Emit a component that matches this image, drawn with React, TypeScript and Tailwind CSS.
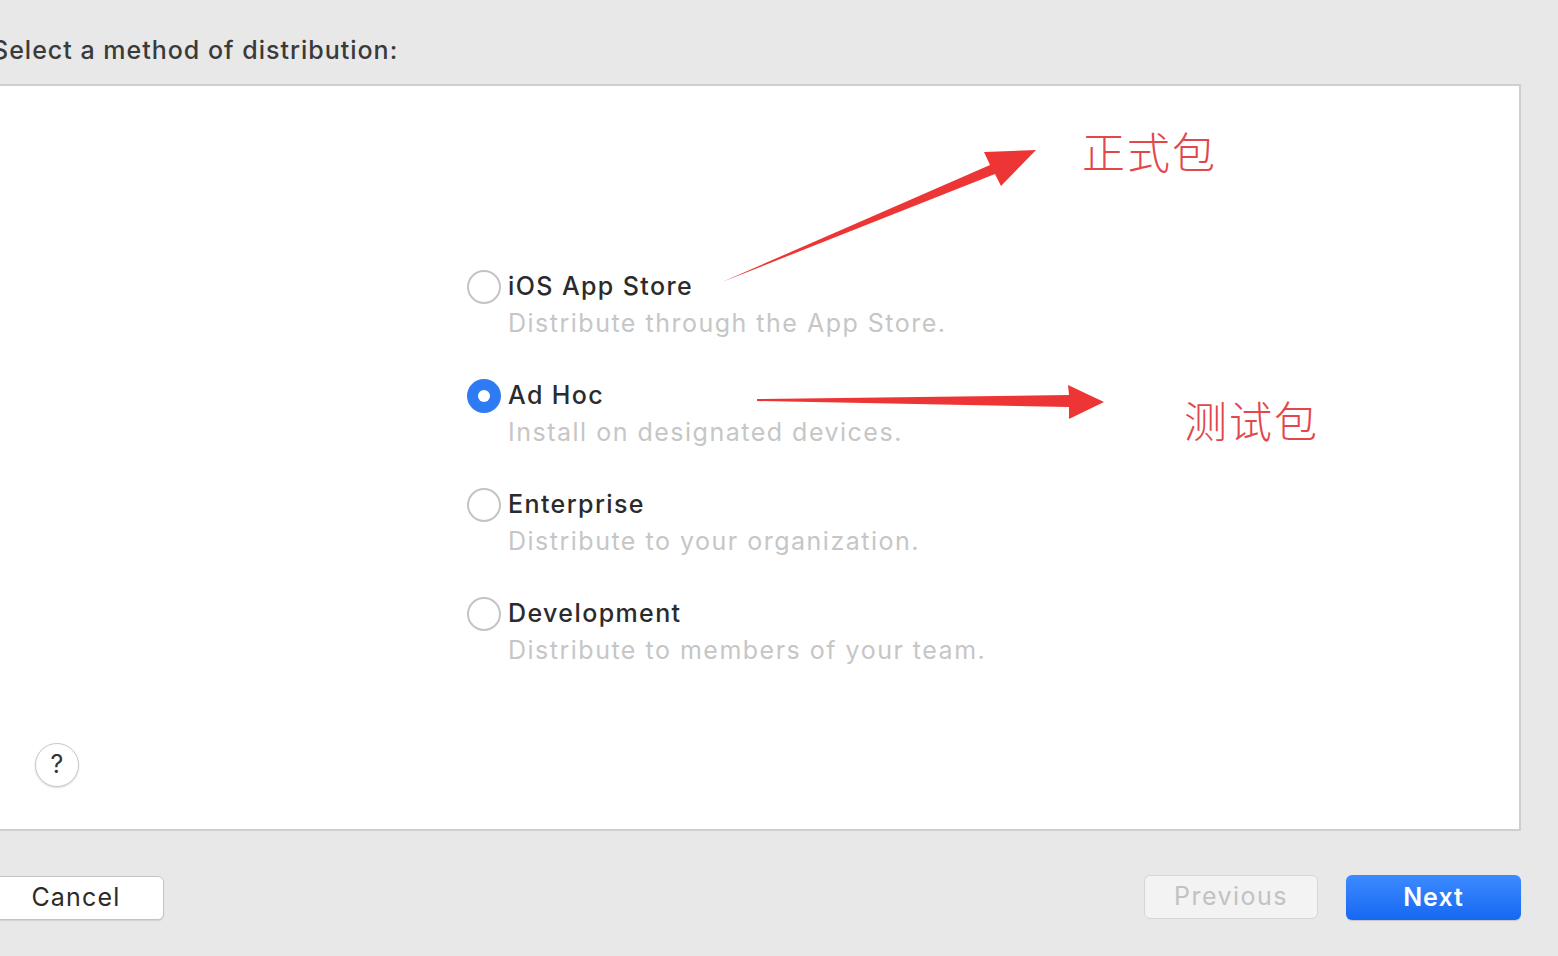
import React from "react";

const options = [
  { title: "iOS App Store", desc: "Distribute through the App Store.", checked: false },
  { title: "Ad Hoc", desc: "Install on designated devices.", checked: true },
  { title: "Enterprise", desc: "Distribute to your organization.", checked: false },
  { title: "Development", desc: "Distribute to members of your team.", checked: false },
];

function Radio({ checked }: { checked: boolean }) {
  if (checked) {
    return (
      <div className="w-[34px] h-[34px] rounded-full bg-[#2f7bf3] flex items-center justify-center shrink-0">
        <div className="w-[12px] h-[12px] rounded-full bg-white" />
      </div>
    );
  }
  return <div className="w-[34px] h-[34px] rounded-full border-2 border-[#c4c4c4] bg-white shrink-0" />;
}

export default function App() {
  return (
    <div
      className="relative w-[1558px] h-[956px] overflow-hidden bg-[#e8e8e8] flex flex-col"
      style={{ fontFamily: "Inter, 'Liberation Sans', 'Noto Sans CJK SC', sans-serif" }}
    >
      {/* header */}
      <div className="h-[84px] flex items-end pb-[18px] -ml-[8px]">
        <h1 className="text-[25px] leading-[32px] font-medium text-[#3a3a3a] tracking-[1px] whitespace-nowrap">
          Select a method of distribution:
        </h1>
      </div>

      {/* panel */}
      <div className="relative -ml-[4px] w-[1525px] h-[747px] bg-white border-2 border-[#cfcfcf] flex flex-col justify-between">
        <div className="pt-[183px] pl-[469px] flex flex-col gap-[36px]">
          {options.map((o) => (
            <div key={o.title} className="flex flex-col">
              <div className="h-[36px] flex items-center gap-[7px]">
                <Radio checked={o.checked} />
                <span className="text-[25px] font-medium text-[#2b2b2b] tracking-[1.4px]">{o.title}</span>
              </div>
              <div className="h-[37px] flex items-center pl-[41px] text-[25px] text-[#c6c6c6] tracking-[1.5px]">
                {o.desc}
              </div>
            </div>
          ))}
        </div>

        <div className="pl-[37px] pb-[42px]">
          <div className="w-[44px] h-[44px] rounded-full bg-white border border-[#c9c9c9] shadow-[0_1px_2px_rgba(0,0,0,0.15)] flex items-center justify-center text-[25px] text-[#333]">
            ?
          </div>
        </div>

        {/* annotations */}
        <svg className="absolute left-0 top-0 pointer-events-none" width="1525" height="747" viewBox="4 84 1525 747">
          <polygon
            fill="#ee3535"
            points="728,280 996,163 990,150 1042,148 1007,184 1001,172"
          />
          <polygon
            fill="#ee3535"
            points="763,397 1075,393 1074,383 1110,400 1075,417 1075,405 763,399"
          />
        </svg>
        <div
          className="absolute left-[1084px] top-[36px] text-[43px] leading-[56px] font-light text-[#e2474b] tracking-[2px]"
          style={{ fontFamily: "'Noto Sans CJK SC', sans-serif" }}
        >
          正式包
        </div>
        <div
          className="absolute left-[1186px] top-[305px] text-[43px] leading-[56px] font-light text-[#e2474b] tracking-[2px]"
          style={{ fontFamily: "'Noto Sans CJK SC', sans-serif" }}
        >
          测试包
        </div>
      </div>

      {/* footer */}
      <div className="flex-1 flex items-center justify-between pr-[37px] -ml-[12px] pt-[8px]">
        <button className="w-[176px] h-[44px] rounded-[6px] bg-white border border-[#c4c4c4] shadow-[0_1px_1px_rgba(0,0,0,0.1)] text-[25px] text-[#2b2b2b] tracking-[1.2px]">
          Cancel
        </button>
        <div className="flex gap-[28px]">
          <button className="w-[174px] h-[44px] rounded-[6px] bg-[#f3f3f3] border border-[#d6d6d6] text-[25px] text-[#c2c2c2] tracking-[1.5px]">
            Previous
          </button>
          <button className="w-[175px] h-[45px] rounded-[6px] bg-gradient-to-b from-[#3d8bff] to-[#1667f2] text-[25px] font-semibold text-white tracking-[1px] shadow-[0_1px_1px_rgba(0,0,0,0.15)]">
            Next
          </button>
        </div>
      </div>
    </div>
  );
}
